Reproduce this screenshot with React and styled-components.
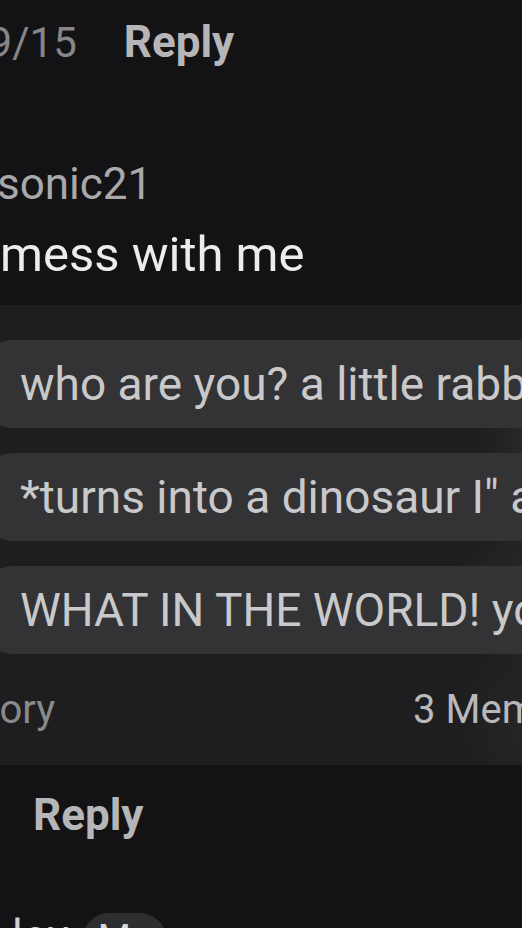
import React from "react";
import styled, { createGlobalStyle } from "styled-components";

const GlobalStyle = createGlobalStyle`
  html, body {
    margin: 0;
    padding: 0;
    background: #131315;
    overflow: hidden;
  }

  body {
    font-family: Roboto, "Noto Sans", "Liberation Sans", sans-serif;
    color: #e9e9e9;
  }
`;

const Page = styled.div`
  width: 522px;
  height: 928px;
  overflow: hidden;
  background: #131315;
  display: flex;
  flex-direction: column;
`;

const MetaRow = styled.div`
  display: flex;
  align-items: baseline;
  gap: 47px;
  margin: 16px 0 0 -35px;
  font-size: 42px;
  line-height: 52.8px;
  white-space: nowrap;
`;

const DateText = styled.span`
  color: #86868a;
`;

const ReplyButton = styled.span`
  font-size: 44px;
  font-weight: 700;
  color: #b6b6b8;
`;

const Author = styled.div`
  margin: 88px 0 0 -3px;
  font-size: 44px;
  line-height: 52.8px;
  color: #a9a9ab;
  white-space: nowrap;
`;

const Message = styled.div`
  margin: 15px 0 0 0;
  font-size: 49px;
  line-height: 57.6px;
  color: #ececee;
  white-space: nowrap;
`;

const ThreadPanel = styled.section`
  margin-top: 22px;
  padding: 35px 0 31px;
  background:
    radial-gradient(circle at 108% 30%, rgba(90, 88, 86, 0.28), transparent 90px),
    radial-gradient(circle at 102% 62%, rgba(80, 78, 76, 0.22), transparent 80px),
    radial-gradient(circle at 104% 90%, rgba(70, 66, 62, 0.25), transparent 90px),
    #1e1e20;
  display: flex;
  flex-direction: column;
  gap: 25px;
`;

const Bubble = styled.div`
  height: 88px;
  margin-left: -14px;
  width: 620px;
  padding-left: 34px;
  border-radius: 26px;
  background: #333335;
  color: #c9c9cb;
  font-size: 46px;
  line-height: 88px;
  white-space: nowrap;
  overflow: hidden;
`;

const PanelFooter = styled.div`
  display: flex;
  gap: 358px;
  margin: 7px 0 0 -37px;
  font-size: 40px;
  line-height: 48px;
  white-space: nowrap;
`;

const FooterLabel = styled.span`
  color: ${(props) => (props.$dim ? "#8a8a8c" : "#b9b9bb")};
`;

const ReplyRow = styled.div`
  margin: 24px 0 0 33px;
  line-height: 52.8px;
`;

const NameRow = styled.div`
  display: flex;
  align-items: center;
  gap: 14px;
  margin: 55px 0 0 12px;
  font-size: 44px;
  line-height: 52.8px;
  color: #d0d0d2;
  white-space: nowrap;
`;

const Badge = styled.span`
  display: inline-flex;
  align-items: center;
  justify-content: center;
  width: 83px;
  height: 52px;
  margin-top: 6px;
  border-radius: 26px;
  background: #2e2e31;
  color: #d8d8da;
  font-size: 38px;
`;

const replies = [
  "who are you? a little rabbit?",
  "*turns into a dinosaur I\" am a dinosaur",
  "WHAT IN THE WORLD! you are a dinosaur",
];

export default function App() {
  return (
    <>
      <GlobalStyle />
      <Page>
        <MetaRow>
          <DateText>09/15</DateText>
          <ReplyButton>Reply</ReplyButton>
        </MetaRow>
        <Author>sonic21</Author>
        <Message>mess with me</Message>
        <ThreadPanel>
          {replies.map((text) => (
            <Bubble key={text}>{text}</Bubble>
          ))}
          <PanelFooter>
            <FooterLabel $dim>Story</FooterLabel>
            <FooterLabel>3 Members</FooterLabel>
          </PanelFooter>
        </ThreadPanel>
        <ReplyRow>
          <ReplyButton>Reply</ReplyButton>
        </ReplyRow>
        <NameRow>
          <span>lov</span>
          <Badge>Me</Badge>
        </NameRow>
      </Page>
    </>
  );
}
